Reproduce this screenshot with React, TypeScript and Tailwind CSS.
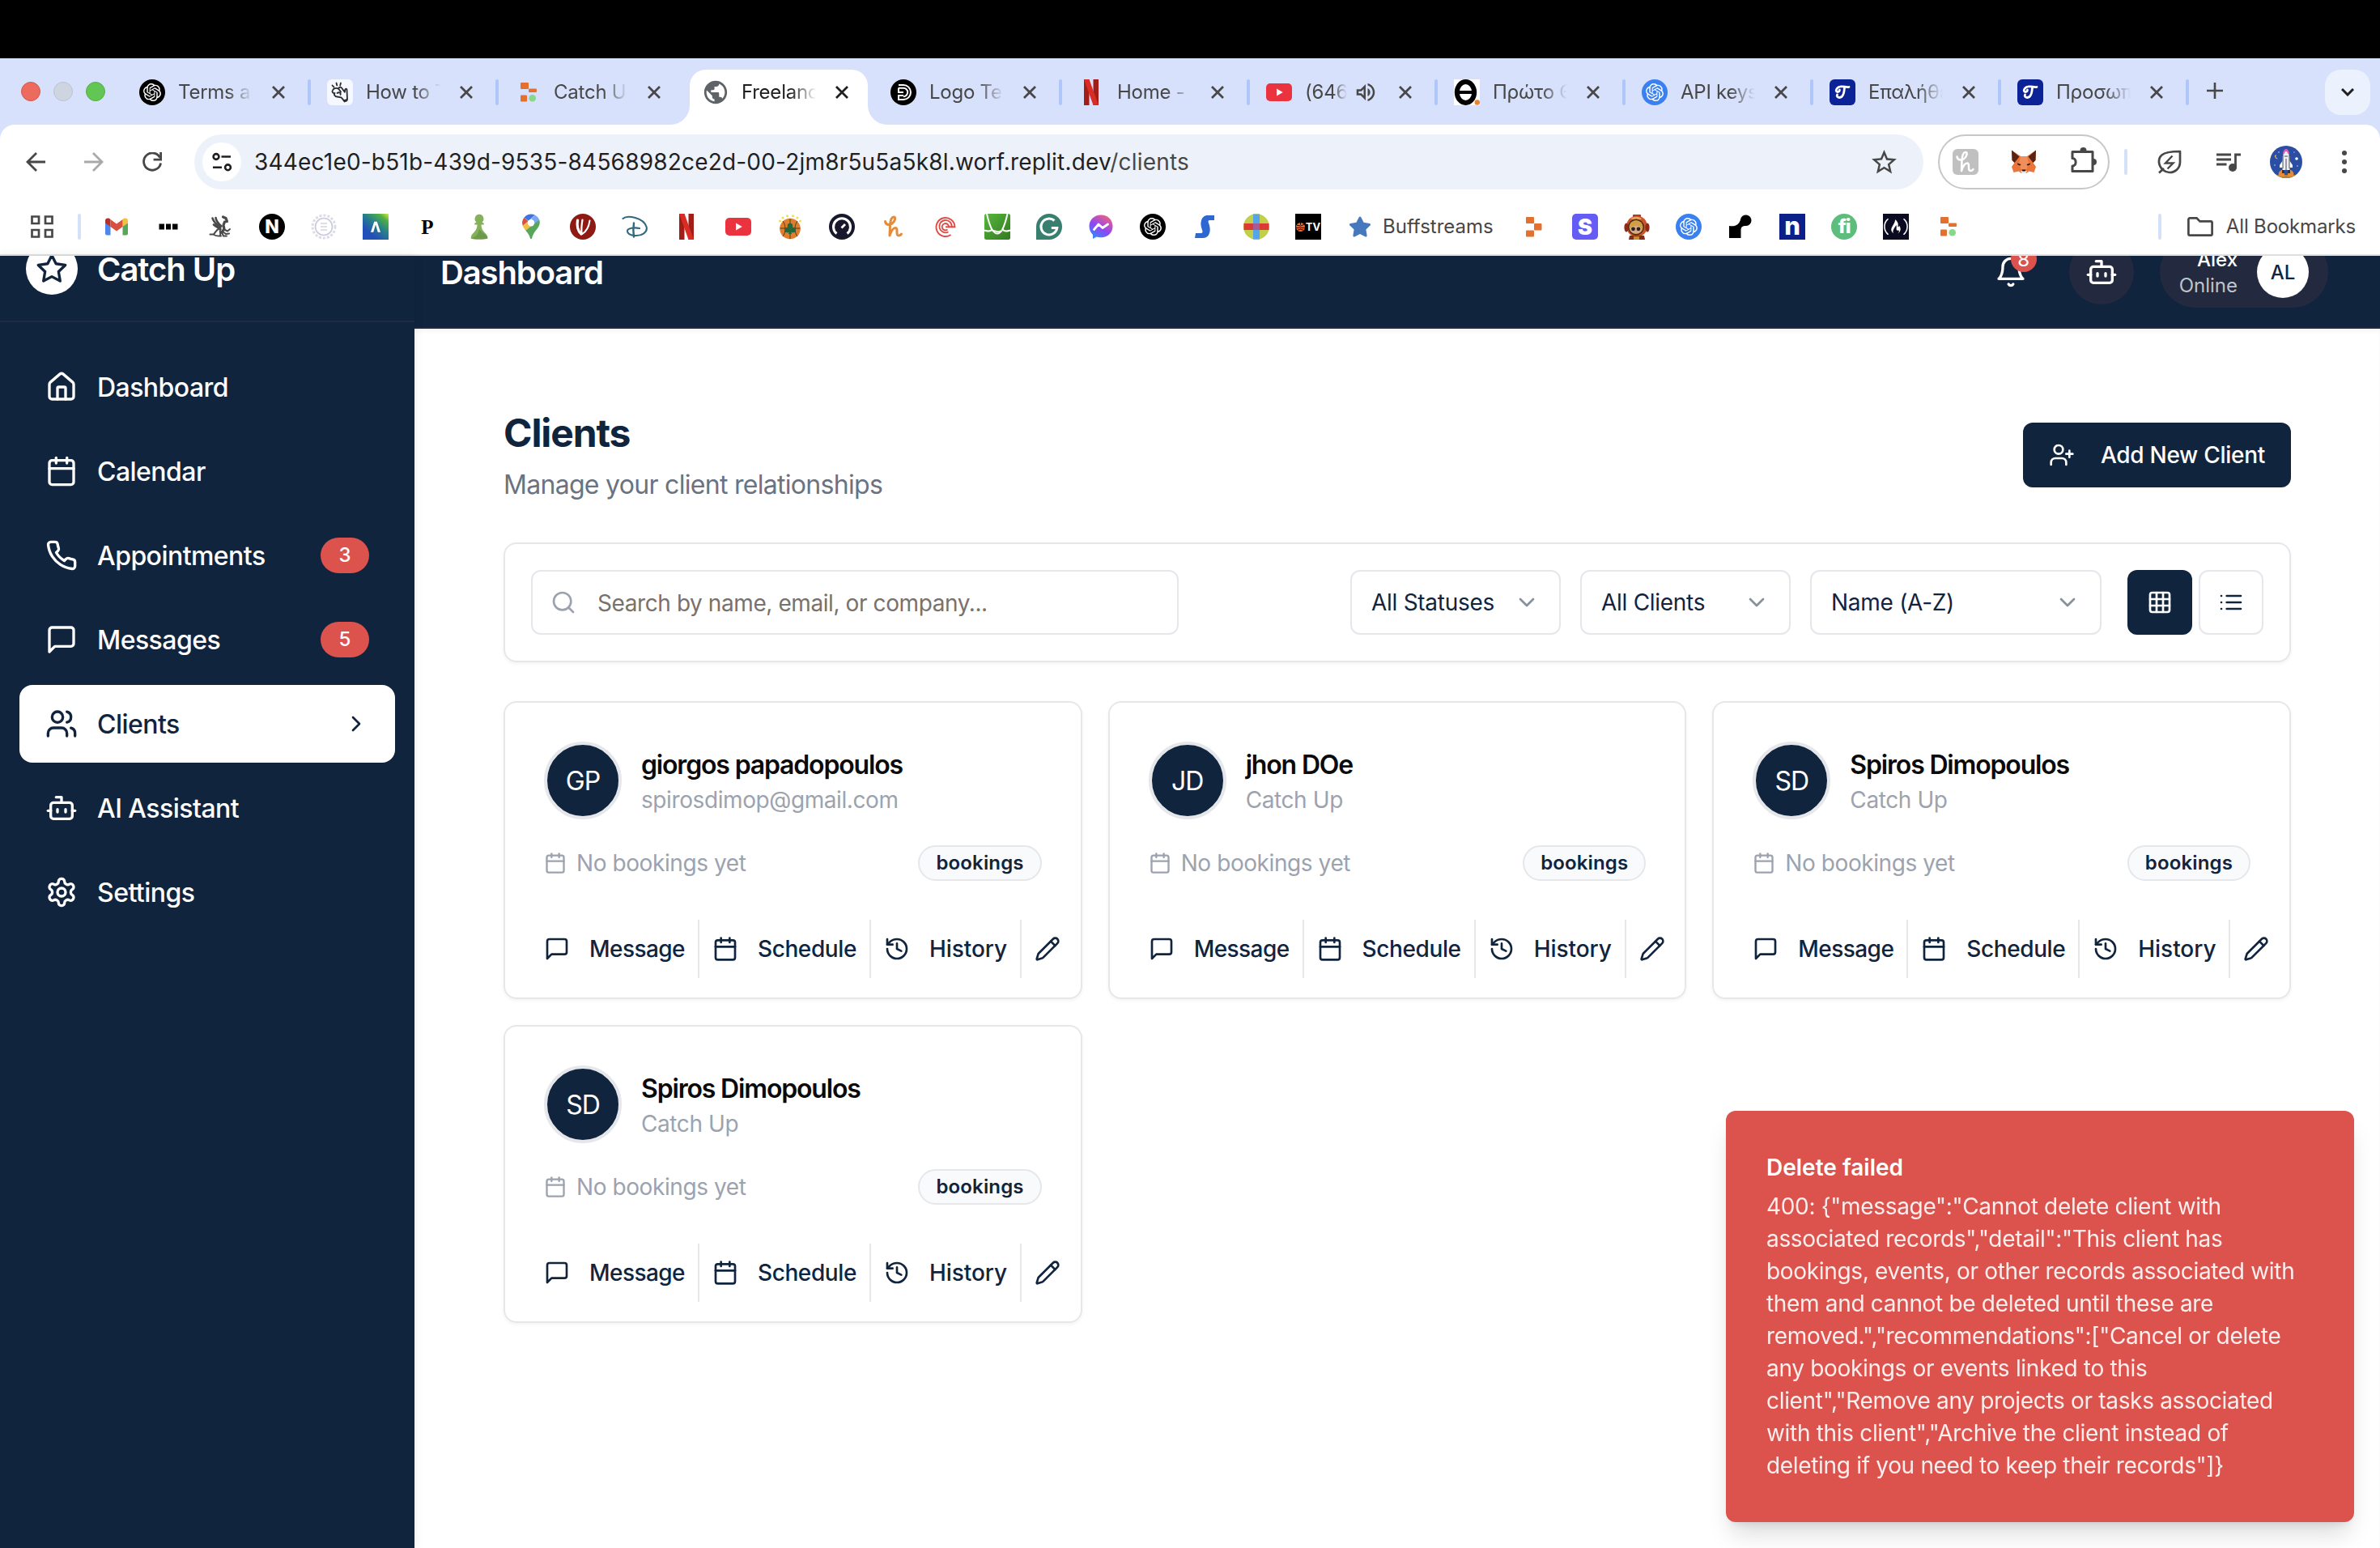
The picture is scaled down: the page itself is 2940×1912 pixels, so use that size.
import type { ReactNode } from "react";
import {
  Bot,
  Calendar,
  ChevronDown,
  ChevronRight,
  Grid3x3,
  History,
  House,
  Pencil,
  Search,
  UserPlus,
  Users,
} from "lucide-react";
import { SiOpenai } from "react-icons/si";
import { MdPublic, MdStarBorder, MdOutlineVolumeUp } from "react-icons/md";
import { FaFreeCodeCamp, FaStar } from "react-icons/fa";

/* ---------- line icons ---------- */

function Line({ className, children }: { className: string; children: ReactNode }) {
  return (
    <svg
      viewBox="0 0 24 24"
      fill="none"
      stroke="currentColor"
      strokeWidth="2"
      strokeLinecap="round"
      strokeLinejoin="round"
      className={className}
    >
      {children}
    </svg>
  );
}

const MessageIcon = ({ className }: { className: string }) => (
  <Line className={className}>
    <path d="M21 15a2 2 0 0 1-2 2H7l-4 4V5a2 2 0 0 1 2-2h14a2 2 0 0 1 2 2z" />
  </Line>
);
const PhoneIcon = ({ className }: { className: string }) => (
  <Line className={className}>
    <path d="M22 16.92v3a2 2 0 0 1-2.18 2 19.79 19.79 0 0 1-8.63-3.07 19.5 19.5 0 0 1-6-6 19.79 19.79 0 0 1-3.07-8.67A2 2 0 0 1 4.11 2h3a2 2 0 0 1 2 1.72 12.84 12.84 0 0 0 .7 2.81 2 2 0 0 1-.45 2.11L8.09 9.91a16 16 0 0 0 6 6l1.27-1.27a2 2 0 0 1 2.11-.45 12.84 12.84 0 0 0 2.81.7A2 2 0 0 1 22 16.92z" />
  </Line>
);
const SettingsIcon = ({ className }: { className: string }) => (
  <Line className={className}>
    <path d="M12.22 2h-.44a2 2 0 0 0-2 2v.18a2 2 0 0 1-1 1.73l-.43.25a2 2 0 0 1-2 0l-.15-.08a2 2 0 0 0-2.73.73l-.22.38a2 2 0 0 0 .73 2.73l.15.1a2 2 0 0 1 1 1.72v.51a2 2 0 0 1-1 1.74l-.15.09a2 2 0 0 0-.73 2.73l.22.38a2 2 0 0 0 2.73.73l.15-.08a2 2 0 0 1 2 0l.43.25a2 2 0 0 1 1 1.73V20a2 2 0 0 0 2 2h.44a2 2 0 0 0 2-2v-.18a2 2 0 0 1 1-1.73l.43-.25a2 2 0 0 1 2 0l.15.08a2 2 0 0 0 2.73-.73l.22-.39a2 2 0 0 0-.73-2.73l-.15-.08a2 2 0 0 1-1-1.74v-.5a2 2 0 0 1 1-1.74l.15-.09a2 2 0 0 0 .73-2.73l-.22-.38a2 2 0 0 0-2.73-.73l-.15.08a2 2 0 0 1-2 0l-.43-.25a2 2 0 0 1-1-1.73V4a2 2 0 0 0-2-2z" />
    <circle cx="12" cy="12" r="3" />
  </Line>
);
const BellIcon = ({ className }: { className: string }) => (
  <Line className={className}>
    <path d="M6 8a6 6 0 0 1 12 0c0 7 3 9 3 9H3s3-2 3-9" />
    <path d="M10.3 21a1.94 1.94 0 0 0 3.4 0" />
  </Line>
);
const StarIcon = ({ className }: { className: string }) => (
  <Line className={className}>
    <polygon points="12 2 15.09 8.26 22 9.27 17 14.14 18.18 21.02 12 17.77 5.82 21.02 7 14.14 2 9.27 8.91 8.26 12 2" />
  </Line>
);
const ListIcon = ({ className }: { className: string }) => (
  <Line className={className}>
    <path d="M8 6h13M8 12h13M8 18h13M3 6h.01M3 12h.01M3 18h.01" />
  </Line>
);

/* ---------- site logos ---------- */

function Logo({ children }: { children: ReactNode }) {
  return (
    <svg viewBox="0 0 32 32" className="size-8 shrink-0">
      {children}
    </svg>
  );
}

const OpenAiLogo = ({ blue }: { blue?: boolean }) => (
  <span
    className={`flex size-8 shrink-0 items-center justify-center rounded-full ${blue ? "bg-[#3a80f0]" : "bg-black"}`}
  >
    <SiOpenai className="size-[22px] text-white" />
  </span>
);

const SnapLogo = () => (
  <Logo>
    <rect width="32" height="32" rx="6" fill="#f6f8ff" />
    <g fill="none" stroke="#2b2b2b" strokeWidth="1.8" strokeLinecap="round" strokeLinejoin="round">
      <path d="M6.5 7.5l2 2.200M11.500 4.500l.8 3M17 4.500l-.8 3" />
      <path d="M7 13.500c-1.500 2 .5 4 2.500 3.500-1.500 2 .5 4.500 3 4.500l5 .8 3.500 4 4-1.500-.3-7-.200-5c-.5-2-2.500-1-2.300 1l-.4 2-4-5.500c-1.500-1.500-4-.3-3.500 1.500-3-1.800-6.500-.5-7.300 1.700z" />
      <path d="M12.500 17c2-1.500 5-.5 4 2M14.500 12l2.500 3.500" />
    </g>
    <path d="M19.500 26l6-2-.3 3-4 1.500z" fill="#2b2b2b" />
  </Logo>
);

const ReplitDuo = () => (
  <Logo>
    <g fill="#e4702f">
      <rect x="7" y="4" width="10" height="8" rx="1" />
      <rect x="17" y="11.500" width="10" height="4.500" rx="1" />
      <rect x="7" y="19.500" width="8" height="8" rx="1" />
    </g>
    <circle cx="21.700" cy="23.200" r="4.300" fill="#86d98a" />
  </Logo>
);

const ReplitLogo = () => (
  <Logo>
    <g fill="#e4702f">
      <rect x="7" y="4" width="10" height="8" rx="1" />
      <rect x="17" y="12" width="9.500" height="8.500" rx="1" />
      <rect x="7" y="20.500" width="10" height="8" rx="1" />
    </g>
  </Logo>
);

const NetflixLogo = () => (
  <Logo>
    <path d="M7 0h6.500v32H7z" fill="#a31d18" />
    <path d="M18.500 0H25v32h-6.500z" fill="#a31d18" />
    <path d="M7 0h6.500L25 32h-6.500z" fill="#d92c25" />
  </Logo>
);

const YouTubeLogo = () => (
  <Logo>
    <rect y="5" width="32" height="22" rx="5" fill="#eb323f" />
    <path d="M13 11.500v9l7.800-4.500z" fill="#fff" />
  </Logo>
);

const LogoTemplate = () => (
  <Logo>
    <circle cx="16" cy="16" r="16" fill="#000" />
    <g fill="none" stroke="#fff" strokeWidth="2">
      <path d="M10 7h6a9 9 0 0 1 0 18H10v-5h6" />
      <path d="M10 10.800h6a5.200 5.200 0 0 1 0 10.400M10 10.500v5.500h6" />
    </g>
  </Logo>
);

const ThetaLogo = () => (
  <Logo>
    <rect width="32" height="32" fill="#fff" />
    <ellipse cx="14.500" cy="16" rx="10.700" ry="13" fill="none" stroke="#000" strokeWidth="6" />
    <path d="M4 16h21" stroke="#000" strokeWidth="4" />
    <circle cx="28.800" cy="28.500" r="3.200" fill="#e8852f" />
  </Logo>
);

const ScriptT = () => (
  <Logo>
    <rect width="32" height="32" rx="6" fill="#0b2396" />
    <g fill="none" stroke="#fff" strokeWidth="2.800" strokeLinecap="round" strokeLinejoin="round">
      <path d="M24 9.500c-4 .8-7-1.500-11-.5-4.500 1-6.500 6-3 6.500 1.800 0 2.600-1.500 2.400-2.500" />
      <path d="M18.500 10c-.3 5-1.500 12.500-6 12.500-2.500 0-4-2-3-3.500" />
    </g>
  </Logo>
);

const GmailLogo = () => (
  <Logo>
    <path d="M2 11v13.500a2 2 0 0 0 2 2h4.500V15z" fill="#4f86ec" />
    <path d="M30 11v13.500a2 2 0 0 1-2 2h-4.500V15z" fill="#58a55c" />
    <path d="M2 8.500C2 5.500 5.500 4.500 8.500 7v9L2 11.500z" fill="#b3322b" />
    <path d="M30 8.500C30 5.500 26.500 4.500 23.500 7v9l6.500-4.500z" fill="#f1bf42" />
    <path d="M8.500 7L16 12.500 23.500 7v9L16 21.500 8.500 16z" fill="#d85140" />
  </Logo>
);

const DotsLogo = () => (
  <Logo>
    <path d="M4.500 12.500h6.500v7H4.500zM13 12.500h6v7h-6zM21 12.500h6.500v7H21z" fill="#000" />
  </Logo>
);

const GriffinLogo = () => (
  <Logo>
    <g fill="none" stroke="#4a4a4a" strokeLinecap="round" strokeLinejoin="round">
      <path d="M6.500 5.500c1 4.500 5 8 9.500 12M10.500 5c.5 4 3.500 7.500 7 10.500M8 13.500c2.500 2.500 5.500 3.500 8.500 5.500" strokeWidth="2.600" />
      <path d="M19.500 4l3.500 1.500 1.500 4-3 .5-1.500 4 1 5-3.500 4" strokeWidth="3.200" />
      <path d="M15 18c-4 2-5 5-7 7.500H3.500M16 19.500c-1 3 1 4 0 7.500M20 19l5 2.500 3-2.500M19 22l4 3 4-.5M18 23l2 4.500h4" strokeWidth="2" />
      <path d="M8 25.500c2 2.500 6 2 9 2" strokeWidth="2" />
    </g>
  </Logo>
);

const LetterN = () => (
  <span className="flex size-8 items-center justify-center rounded-full bg-black text-[23px] font-extrabold leading-none text-white">
    N
  </span>
);

const GearLogo = () => (
  <Logo>
    <circle cx="16" cy="16" r="14" fill="none" stroke="#dcdce8" strokeWidth="3" strokeDasharray="3 2" />
    <circle cx="16" cy="16" r="10.500" fill="none" stroke="#c9c9dc" strokeWidth="1.600" />
    <path d="M12 12h8M12 16h8M12 20h8" stroke="#d4d4e2" strokeWidth="1.600" />
  </Logo>
);

const GradientA = () => (
  <Logo>
    <defs>
      <linearGradient id="ga" x1="1" y1="0" x2="0.350" y2="0.800">
        <stop offset="0" stopColor="#d5ea3c" />
        <stop offset="0.250" stopColor="#4fae48" />
        <stop offset="0.600" stopColor="#27808a" />
        <stop offset="1" stopColor="#2250b8" />
      </linearGradient>
    </defs>
    <rect width="32" height="32" fill="url(#ga)" />
    <path d="M10 22.800l4.300-13h3.400l4.300 13h-3.200L16 13.500l-2.800 9.300z" fill="#fff" />
  </Logo>
);

const LetterP = () => (
  <span className="text-[25px] font-bold leading-none text-black [font-family:'Liberation_Serif',serif]">P</span>
);

const PawnLogo = () => (
  <Logo>
    <path
      d="M16 .8a5.500 5.500 0 0 1 3.500 9.700l2.200 1.300v1.700h-3.200c.2 5 2 7.500 5 10.500 2 2 2.800 3.500 2.800 6.500-3 1.300-17.600 1.300-20.600 0 0-3 .8-4.500 2.800-6.500 3-3 4.800-5.500 5-10.500h-3.200v-1.700l2.200-1.300A5.500 5.500 0 0 1 16 .8z"
      fill="#85b15a"
    />
    <path d="M16 19c3 4 7 6 10.200 9v2.500c-3 1.300-17.600 1.300-20.600 0 4-.5 9-4 10.400-11.500z" fill="#6d9a4c" />
  </Logo>
);

const MapsLogo = () => (
  <Logo>
    <path d="M16 .5a11 11 0 0 0-8.400 3.900l5.400 4.500 7.700-7.300A11 11 0 0 0 16 .5z" fill="#3f74e0" />
    <path d="M7.600 4.400A11 11 0 0 0 5.800 15l6.800-5.700z" fill="#d85140" />
    <path d="M20.700 1.500a11 11 0 0 1 5.600 6l-7 6.500-5-5z" fill="#7aa7f5" />
    <path d="M5.800 15c.8 2.200 2 3.900 3.500 5.800L19.500 14l-7-5z" fill="#f1bf42" />
    <path d="M26.300 7.500C28 13 25 17 22 20.500c-3 3.700-4 6-5 10-.3 1-1.700 1-2 0-1-4-2.500-6-5.700-9.700z" fill="#58a55c" />
    <circle cx="16" cy="11.300" r="4.200" fill="#fff" />
  </Logo>
);

const VLogo = () => (
  <Logo>
    <circle cx="16" cy="16" r="16" fill="#8e1b13" />
    <g fill="none" stroke="#fff" strokeLinecap="round">
      <path d="M9.500 8c-1 6 0 13 4.500 17" strokeWidth="3.200" />
      <path d="M15.500 7.500c-1 6-1.500 12-1 17.500" strokeWidth="2.200" />
      <path d="M24.500 8.500c-1 7-4 13.500-9.500 16.500" strokeWidth="2" />
    </g>
  </Logo>
);

const DisneyLogo = () => (
  <Logo>
    <g fill="none" stroke="#30697b" strokeLinecap="round">
      <path d="M1.500 6C7 1 27 5 30.500 16c2 7-6 11.500-14 11-6-.3-10-3-9.500-6 .5-3 8-4.500 15-3" strokeWidth="2.100" />
      <path d="M15 11.500c-.8 5-.8 11 0 17" strokeWidth="2.400" />
    </g>
  </Logo>
);

const PaoLogo = () => (
  <Logo>
    <circle cx="16" cy="18.500" r="12.800" fill="#df7f2e" />
    <g fill="none" stroke="#57381a" strokeWidth="1">
      <path d="M16 6v25M3.500 18h25M7 9c4 5 4 14 0 19M25 9c-4 5-4 14 0 19" />
    </g>
    <g fill="#24683a">
      <circle cx="16" cy="15" r="3.300" />
      <circle cx="12.500" cy="20" r="3.300" />
      <circle cx="19.500" cy="20" r="3.300" />
      <path d="M15.200 20h1.600l1.200 5h-4z" />
    </g>
    <g fill="#f7dc4a">
      <circle cx="3.500" cy="9" r="1.500" />
      <circle cx="7" cy="5" r="1.500" />
      <circle cx="12.500" cy="2.800" r="1.500" />
      <circle cx="19.500" cy="2.800" r="1.500" />
      <circle cx="25" cy="5" r="1.500" />
      <circle cx="28.500" cy="9" r="1.500" />
    </g>
  </Logo>
);

const GaugeLogo = () => (
  <Logo>
    <circle cx="16" cy="16" r="16" fill="#17182c" />
    <path d="M9.500 24.500a10.500 10.500 0 1 1 13 0" fill="none" stroke="#fff" strokeWidth="3" />
    <path d="M15.500 17.500l4.500-4.500" stroke="#fff" strokeWidth="2.800" />
  </Logo>
);

const HoneyMark = ({ tone }: { tone: "orange" | "white" }) => (
  <g
    fill="none"
    stroke={tone === "orange" ? "#e58c3a" : "#ffffff"}
    strokeWidth={tone === "orange" ? 3 : 2.500}
    strokeLinecap="round"
    strokeLinejoin="round"
  >
    <path d="M5.500 9.500c.5 4 4.500 5 8 3 4-2.300 5.500-8.500 2.800-8.500-3 0-4.600 5-4.800 11l-.5 12c2-6 4.500-9.500 7-9.500 3.500 0 1 6 2.500 8.500 1 1.500 4 1 5-1" />
  </g>
);

const HoneyLogo = () => (
  <Logo>
    <HoneyMark tone="orange" />
  </Logo>
);

const CastLogo = () => (
  <Logo>
    <g fill="none" stroke="#dc4d48" strokeWidth="1.900">
      <path d="M22.500 26a11.500 11.500 0 1 1 5-9.700h-4" />
      <path d="M19.500 22.500a7.700 7.700 0 1 1 4.200-6.200h-4" />
      <path d="M18.500 19.500a4.200 4.200 0 1 1 1.600-3.200h-4" />
    </g>
  </Logo>
);

const GreenLogo = () => (
  <Logo>
    <defs>
      <linearGradient id="gg" x1="0" y1="0" x2="1" y2="1">
        <stop offset="0" stopColor="#55b83c" />
        <stop offset="1" stopColor="#33791f" />
      </linearGradient>
    </defs>
    <rect width="32" height="32" rx="2.500" fill="url(#gg)" />
    <g fill="none" stroke="#fff" strokeWidth="2">
      <path d="M3 0c1.500 7 3.500 14 6.500 20M22 20c3-6 5-13 6.500-20" />
      <path d="M0 20.500c3 .5 6 3 9.500-1 2.500 4 4.500 5 6.500 5s4-1 6.500-5c3.500 4 6.500 1.500 9.500 1" />
      <path d="M9.500 21c4-1 7 3.500 11 0" />
    </g>
  </Logo>
);

const GrammarlyLogo = () => (
  <Logo>
    <path d="M0 16a16 16 0 1 1 16 16H0z" fill="#397f70" />
    <path d="M22.500 8.500a10 10 0 1 0 3.300 9h-7" fill="none" stroke="#fff" strokeWidth="3" />
  </Logo>
);

const MessengerLogo = () => (
  <Logo>
    <defs>
      <linearGradient id="ms" x1="0.200" y1="1" x2="0.800" y2="0">
        <stop offset="0" stopColor="#2f8ff7" />
        <stop offset="0.450" stopColor="#8f45f5" />
        <stop offset="1" stopColor="#f0647c" />
      </linearGradient>
    </defs>
    <path d="M16 1.500C7.500 1.500 1.500 7.700 1.500 15.600c0 4.200 1.700 7.800 4.500 10.300v5l4.500-2.500c1.700.5 3.600.8 5.500.8 8.500 0 14.500-6 14.500-13.800S24.500 1.500 16 1.500z" fill="url(#ms)" />
    <path d="M7.500 19.500l5.500-6.500 5 4.500 6.500-4.500" fill="none" stroke="#fff" strokeWidth="2.800" strokeLinejoin="round" strokeLinecap="round" />
  </Logo>
);

const BlueS = () => (
  <Logo>
    <path d="M28 2v6h-5.500c-2 0-2.500 1-1.500 3.500 1.500 4 2 7 1.500 10.500-.8 5-4 8-8.500 8H4l1-6h6c2.500 0 3-1 2-4-1.500-4.500-2-7-1.300-10.500C12.700 4.500 15.500 2 20 2z" fill="#2f67d2" />
  </Logo>
);

const GlobeStripes = () => (
  <Logo>
    <circle cx="16" cy="16" r="16" fill="#c2cf4a" />
    <path d="M12 .5h8v31h-8z" fill="#56a5e8" />
    <path d="M.5 12h31v8H.5z" fill="#dd3a36" />
    <path d="M12 12h8v8h-8z" fill="#a85a92" />
  </Logo>
);

const TvLogo = () => (
  <span className="flex size-8 items-center justify-center gap-px bg-black text-[13px] font-bold leading-none text-white">
    <svg viewBox="0 0 12 12" className="size-[11px]">
      <circle cx="6" cy="6" r="6" fill="#ee6a2c" />
      <path d="M1 3.500l5 1 5-2M0 7h12M2 10l4-1 4 1M6 0v3" stroke="#000" strokeWidth="1" fill="none" />
    </svg>
    TV
  </span>
);

const StripeS = () => (
  <span className="flex size-8 items-center justify-center rounded-[5px] bg-[#655cf5] text-[27px] font-black leading-none text-white">
    S
  </span>
);

const DiverLogo = () => (
  <Logo>
    <rect x="11" y="1" width="10" height="4" rx="1" fill="#b3321f" />
    <circle cx="16" cy="15.500" r="13" fill="#c9552a" />
    <ellipse cx="3" cy="17" rx="2.600" ry="5.500" fill="#8f2a1a" />
    <ellipse cx="29" cy="17" rx="2.600" ry="5.500" fill="#8f2a1a" />
    <path d="M8 6c4-3 10-3 14 0l-5 3z" fill="#e9a35b" />
    <circle cx="15" cy="16.500" r="10" fill="#4a2415" />
    <circle cx="15" cy="16.500" r="8.600" fill="#cf9f45" />
    <ellipse cx="15" cy="19.500" rx="7" ry="4.800" fill="#d9a98c" />
    <circle cx="11.500" cy="18.800" r="2.400" fill="#2c211f" />
    <circle cx="18" cy="18.800" r="2.400" fill="#2c211f" />
    <path d="M7 27h18l1 5H6z" fill="#7f2e1a" />
    <path d="M12 28h7v4h-7z" fill="#c98a38" />
  </Logo>
);

const BlobLogo = () => (
  <Logo>
    <path d="M2 15c8 1.500 13-2.500 14-8a6.800 6.800 0 1 1 7 8c-5 0-6.500 1.500-6.500 6v9H2z" fill="#000" />
  </Logo>
);

const LetterSmallN = () => (
  <span className="flex size-8 items-center justify-center bg-[#0b2189] pb-[3px] text-[31px] font-extrabold leading-none text-white">
    n
  </span>
);

const FiverrLogo = () => (
  <span className="flex size-8 items-center justify-center rounded-full bg-[#5cbd7c] text-[24px] font-extrabold leading-none tracking-tighter text-white">
    fi
  </span>
);

const CampLogo = () => (
  <span className="flex size-8 items-center justify-center bg-[#0a0a20]">
    <FaFreeCodeCamp className="size-[30px] text-white" />
  </span>
);

const FoxLogo = () => (
  <svg viewBox="0 0 32 32" className="size-8">
    <path d="M1 1.500L12 9h8L31 1.500 30.500 14l-3 3 3.500 5-2.500 7-6-1.500L19 30h-6l-3.500-2.500-6 1.500L1 22l3.500-5-3-3z" fill="#e9753a" />
    <path d="M1 1.500l9.500 8L4.500 17l-3-3zM31 1.500l-9.500 8 6 7.500 3-3z" fill="#5a2212" />
    <path d="M12 9h8l2 9-3 8h-6l-3-8z" fill="#f08f5c" />
    <path d="M8 17.500l4.500 1.500-1 1.500-3-1zM24 17.500L19.500 19l1 1.500 3-1z" fill="#2f1a12" />
    <path d="M12 27h8l-1.500 3h-5z" fill="#e6e6e6" />
    <path d="M13.500 25.500h5l-1 2h-3z" fill="#20130f" />
  </svg>
);

const RocketAvatar = () => (
  <svg viewBox="0 0 40 40" className="size-10">
    <defs>
      <clipPath id="av">
        <circle cx="20" cy="20" r="20" />
      </clipPath>
    </defs>
    <g clipPath="url(#av)">
      <rect width="40" height="40" fill="#2a4ea4" />
      <rect y="36" width="40" height="4" fill="#b98234" />
      <path d="M11 38c-1-4 0-6 3-8h4v8zM29 38c1-4 0-6-3-8h-4v8z" fill="#e5893a" />
      <path d="M15 13h10v17H15z" fill="#9a9aa2" />
      <path d="M20 4c3 3 4 7 4 12v14h-8V16c0-5 1-9 4-12z" fill="#eceef2" />
      <path d="M16 10c0-3 2-6 4-6s4 3 4 6h-2c0-2-1-3-2-3s-2 1-2 3z" fill="#e05bb4" />
      <path d="M16 18l-4 6v3h4zM24 18l4 6v3h-4z" fill="#fff" />
      <path d="M15 30h3v4h-3zM22 30h3v4h-3z" fill="#30343f" />
      <path d="M18 13h4M20 16v14M16 12v16M24 12v16" stroke="#444a5a" strokeWidth="1" />
      <path d="M6 12c0 3 2 5 4 4-3-1-3-3-2-5z" fill="#f1c84b" />
      <circle cx="33" cy="16" r="1.800" fill="#fff" />
      <circle cx="11" cy="8" r=".8" fill="#cdd8f5" />
      <circle cx="30" cy="8" r=".8" fill="#e58ac0" />
      <circle cx="34" cy="25" r=".8" fill="#cdd8f5" />
      <circle cx="6" cy="24" r=".8" fill="#cdd8f5" />
    </g>
  </svg>
);

/* ---------- browser frame ---------- */

const CloseIcon = () => (
  <svg viewBox="0 0 16 16" className="size-4 shrink-0" fill="none" stroke="currentColor" strokeWidth="2.800">
    <path d="M1 1l14 14M15 1L1 15" />
  </svg>
);

type TabData = { title: string; icon: ReactNode; active?: boolean; sound?: boolean; sep?: boolean };

const tabs: TabData[] = [
  { title: "Terms an", icon: <OpenAiLogo />, sep: true },
  { title: "How to T", icon: <SnapLogo />, sep: true },
  { title: "Catch U", icon: <ReplitDuo /> },
  { title: "Freelanc", icon: <MdPublic className="size-[34px] -mx-px shrink-0 text-[#5f6368]" />, active: true },
  { title: "Logo Te", icon: <LogoTemplate />, sep: true },
  { title: "Home -", icon: <NetflixLogo />, sep: true },
  { title: "(646", icon: <YouTubeLogo />, sound: true, sep: true },
  { title: "Πρώτο Θ", icon: <ThetaLogo />, sep: true },
  { title: "API keys", icon: <OpenAiLogo blue />, sep: true },
  { title: "Επαλήθε", icon: <ScriptT />, sep: true },
  { title: "Προσωπ", icon: <ScriptT />, sep: true },
];

function Tab({ tab }: { tab: TabData }) {
  return (
    <div className={`relative flex h-[68px] w-[232px] shrink-0 items-start px-1.5 ${tab.active ? "text-[#1f1f1f]" : "text-[#474747]"}`}>
      {tab.active && (
        <>
          <svg viewBox="0 0 24 24" className="absolute bottom-0 -left-[18px] size-6">
            <path d="M24 0v24H0A24 24 0 0 0 24 0z" fill="#fff" />
          </svg>
          <svg viewBox="0 0 24 24" className="absolute -right-[18px] bottom-0 size-6">
            <path d="M0 0v24h24A24 24 0 0 1 0 0z" fill="#fff" />
          </svg>
        </>
      )}
      <div className={`flex h-[68px] w-[220px] items-center pb-3 pl-4 ${tab.active ? "rounded-t-[20px] bg-white" : ""}`}>
        {tab.icon}
        <span
          className={`ml-4 overflow-hidden whitespace-nowrap text-[24px] tracking-[-0.01em] [mask-image:linear-gradient(to_right,#000_66%,transparent)] ${
            tab.sound ? "w-[52px]" : "w-[92px]"
          }`}
        >
          {tab.title}
        </span>
        {tab.sound && <MdOutlineVolumeUp className="ml-2 size-[30px] shrink-0" />}
        <span className={tab.sound ? "ml-[26px]" : "ml-6"}>
          <CloseIcon />
        </span>
      </div>
      {tab.sep && <span className="absolute top-3 -right-0.5 h-8 w-1 rounded-full bg-[#aec6f8]" />}
    </div>
  );
}

function TabStrip() {
  return (
    <div className="flex h-[82px] items-start bg-[#d7e1fb] pt-[14px] pr-3">
      <div className="flex h-[54px] w-[150px] shrink-0 items-center gap-4 pl-[26px]">
        <span className="size-6 rounded-full border border-[#d6584d] bg-[#ec6a5e]" />
        <span className="size-6 rounded-full border border-[#bcc3d0] bg-[#ced5e1]" />
        <span className="size-6 rounded-full border border-[#57ae42] bg-[#62c654]" />
      </div>
      {tabs.map((t, i) => (
        <Tab key={i} tab={t} />
      ))}
      <svg viewBox="0 0 20 20" className="mt-4 ml-6 size-5" fill="none" stroke="#474747" strokeWidth="2.600">
        <path d="M10 0v20M0 10h20" />
      </svg>
      <span className="ml-auto flex size-14 items-center justify-center rounded-[20px] bg-[#ecf2fd]">
        <svg viewBox="0 0 16 10" className="h-[10px] w-4" fill="none" stroke="#1f1f1f" strokeWidth="3">
          <path d="M1 1l7 7 7-7" />
        </svg>
      </span>
    </div>
  );
}

function Toolbar() {
  return (
    <div className="flex h-[92px] items-center pr-[41px] pl-8 text-[#474747]">
      <svg viewBox="0 0 24 24" className="size-6" fill="none" stroke="currentColor" strokeWidth="2.800">
        <path d="M24 12H2M13 1L2 12l11 11" />
      </svg>
      <svg viewBox="0 0 24 24" className="ml-12 size-6" fill="none" stroke="#a9a9a9" strokeWidth="2.800">
        <path d="M0 12h22M11 1l11 11-11 11" />
      </svg>
      <svg viewBox="0 0 24 24" className="ml-12 size-6" fill="none" stroke="currentColor" strokeWidth="2.800">
        <path d="M21.500 6.500A10.600 10.600 0 1 0 22.600 13.500" />
        <path d="M22.600 0v9.200h-9" />
      </svg>
      <div className="ml-10 flex h-[68px] w-[2136px] items-center rounded-full bg-[#edf2fa] pr-[30px] pl-[10px]">
        <span className="flex size-12 items-center justify-center rounded-full bg-white">
          <svg viewBox="0 0 26 24" className="h-6 w-[26px]" fill="none" stroke="#1f1f1f" strokeWidth="2.600">
            <circle cx="6" cy="5.500" r="3.400" />
            <path d="M12.500 5.500H24M2 18.800h11" />
            <circle cx="20.500" cy="18.800" r="3.400" />
          </svg>
        </span>
        <span className="ml-4 text-[28px] tracking-[0.0068em] text-[#1f1f1f]">
          344ec1e0-b51b-439d-9535-84568982ce2d-00-2jm8r5u5a5k8l.worf.replit.dev
          <span className="text-[#474747]">/clients</span>
        </span>
        <MdStarBorder className="ml-auto size-[37px]" />
      </div>
      <div className="ml-[18px] flex h-[68px] w-[212px] items-center justify-between rounded-full border-2 border-[#c7c7c7] pr-3.5 pl-4">
        <svg viewBox="0 0 32 32" className="size-8">
          <rect width="32" height="32" rx="6" fill="#c0c0c0" />
          <HoneyMark tone="white" />
        </svg>
        <span className="-ml-0.5">
          <FoxLogo />
        </span>
        <svg viewBox="0 0 32 32" className="-mt-1 size-8" fill="none" stroke="currentColor" strokeWidth="3">
          <path d="M2 5.500h25v24H2v-6.500c5.500 0 5.500-9.500 0-9.500z" strokeLinejoin="round" />
          <path d="M11.500 4a4 4 0 0 1 8 0zM28 14a4 4 0 0 1 0 8z" fill="currentColor" stroke="none" />
        </svg>
      </div>
      <span className="ml-[18px] h-8 w-1 rounded-full bg-[#d3e1fb]" />
      <svg viewBox="0 0 30 30" className="ml-[37px] size-[30px]" fill="none" stroke="currentColor" strokeWidth="2.700">
        <path d="M28 2v13c0 8-6 13-13 13-3 0-5.500-1-8-3C.500 19 .500 11 5.500 6.500 9.500 3 17 2 28 2z" strokeLinejoin="round" />
        <path d="M8 23l-6 5.500" />
        <path d="M18.500 7.500l-8.500 9h9.500l-7 7" strokeWidth="2.400" />
      </svg>
      <svg viewBox="0 0 30 24" className="ml-[43px] h-6 w-[30px]" fill="none" stroke="currentColor" strokeWidth="2.800">
        <path d="M0 3h18M0 9h18M0 15h12.500M30 3h-6.500v16" />
        <circle cx="20" cy="19" r="5" fill="currentColor" stroke="none" />
      </svg>
      <span className="ml-9">
        <RocketAvatar />
      </span>
      <svg viewBox="0 0 6 28" className="ml-auto h-7 w-1.5" fill="currentColor">
        <circle cx="3" cy="3" r="3" />
        <circle cx="3" cy="14" r="3" />
        <circle cx="3" cy="25" r="3" />
      </svg>
    </div>
  );
}

const bookmarks: ReactNode[] = [
  <GmailLogo />,
  <DotsLogo />,
  <GriffinLogo />,
  <LetterN />,
  <GearLogo />,
  <GradientA />,
  <LetterP />,
  <PawnLogo />,
  <MapsLogo />,
  <VLogo />,
  <DisneyLogo />,
  <NetflixLogo />,
  <YouTubeLogo />,
  <PaoLogo />,
  <GaugeLogo />,
  <HoneyLogo />,
  <CastLogo />,
  <GreenLogo />,
  <GrammarlyLogo />,
  <MessengerLogo />,
  <OpenAiLogo />,
  <BlueS />,
  <GlobeStripes />,
  <TvLogo />,
];

const bookmarksAfter: ReactNode[] = [
  <ReplitLogo />,
  <StripeS />,
  <DiverLogo />,
  <OpenAiLogo blue />,
  <BlobLogo />,
  <LetterSmallN />,
  <FiverrLogo />,
  <CampLogo />,
  <ReplitDuo />,
];

function Slot({ children }: { children: ReactNode }) {
  return <span className="flex w-16 shrink-0 items-center justify-center">{children}</span>;
}

function BookmarksBar() {
  return (
    <div className="flex h-[68px] items-center pr-[30px] pl-[38px] text-[24px] text-[#474747]">
      <svg viewBox="0 0 28 28" className="size-7" fill="none" stroke="currentColor" strokeWidth="2.700">
        <path d="M1.500 1.500h8.500v8.500H1.500zM18 1.500h8.500v8.500H18zM1.500 18h8.500v8.500H1.500zM18 18h8.500v8.500H18z" />
      </svg>
      <span className="mr-3 ml-[30px] h-8 w-1 rounded-full bg-[#d3e1fb]" />
      {bookmarks.map((b, i) => (
        <Slot key={i}>{b}</Slot>
      ))}
      <div className="flex w-[214px] shrink-0 items-center gap-3.5 pl-[18px]">
        <FaStar className="size-7 text-[#4678bd]" />
        <span>Buffstreams</span>
      </div>
      {bookmarksAfter.map((b, i) => (
        <Slot key={i}>{b}</Slot>
      ))}
      <span className="ml-auto h-8 w-1 rounded-full bg-[#d3e1fb]" />
      <svg viewBox="0 0 32 24" className="mr-4 ml-8 h-6 w-8" fill="none" stroke="currentColor" strokeWidth="2.700">
        <path d="M3 1.400h8.500l4 4H29a1.600 1.600 0 0 1 1.600 1.600v14A1.600 1.600 0 0 1 29 22.600H3A1.600 1.600 0 0 1 1.400 21V3A1.600 1.600 0 0 1 3 1.400z" />
      </svg>
      <span className="tracking-[-0.007em]">All Bookmarks</span>
    </div>
  );
}

/* ---------- application ---------- */

type NavEntry = { label: string; icon: ReactNode; badge?: string; active?: boolean };

const nav: NavEntry[] = [
  { label: "Dashboard", icon: <House className="size-10" /> },
  { label: "Calendar", icon: <Calendar className="size-10" /> },
  { label: "Appointments", icon: <PhoneIcon className="size-10" />, badge: "3" },
  { label: "Messages", icon: <MessageIcon className="size-10" />, badge: "5" },
  { label: "Clients", icon: <Users className="size-10" />, active: true },
  { label: "AI Assistant", icon: <Bot className="size-10" /> },
  { label: "Settings", icon: <SettingsIcon className="size-10" /> },
];

function Sidebar() {
  return (
    <aside className="z-10 flex w-[512px] shrink-0 flex-col overflow-hidden bg-[#11243d] text-white shadow-[0_0_12px_rgba(0,0,0,0.08)]">
      <div className="-mt-12 flex h-[130px] shrink-0 items-center gap-6 border-b-2 border-[#1e2b45] px-8">
        <span className="flex size-16 items-center justify-center rounded-full bg-white text-[#11243d]">
          <StarIcon className="size-10" />
        </span>
        <span className="pt-0.5 text-[40px] font-semibold tracking-[-0.026em]">Catch Up</span>
      </div>
      <nav className="flex flex-col gap-2 px-6 py-8">
        {nav.map((n) => (
          <div
            key={n.label}
            className={`flex h-24 items-center rounded-2xl px-8 ${n.active ? "bg-white text-[#11243d]" : ""}`}
          >
            {n.icon}
            <span className="ml-6 pt-0.5 text-[32px] font-medium tracking-[-0.017em]">{n.label}</span>
            {n.badge && (
              <span className="ml-auto flex h-11 w-[60px] items-center justify-center rounded-full bg-[#dc524c] text-[24px] font-medium">
                {n.badge}
              </span>
            )}
            {n.active && <ChevronRight className="ml-auto size-8" />}
          </div>
        ))}
      </nav>
    </aside>
  );
}

function AppHeader() {
  return (
    <header className="h-[90px] shrink-0 overflow-hidden bg-[#11243d] text-white">
      <div className="-mt-12 flex h-[138px] items-center gap-8 border-b-2 border-[#1f2a45] pr-16 pl-8">
        <h1 className="mr-auto pt-px text-[40px] font-semibold tracking-[-0.028em]">Dashboard</h1>
        <span className="relative flex size-20 items-center justify-center">
          <BellIcon className="size-10" />
          <span className="absolute top-2 right-2 flex size-8 items-center justify-center rounded-full bg-[#dc524c] pt-0.5 text-[24px]">
            8
          </span>
        </span>
        <span className="flex size-20 items-center justify-center rounded-full bg-[#232a3f]">
          <Bot className="size-10" />
        </span>
        <div className="flex h-[88px] items-center gap-6 rounded-full bg-[#232a3f] px-6">
          <div className="pt-0.5 text-right text-[24px] leading-8">
            <div className="font-medium">Alex</div>
            <div className="text-[#bfc3cb]">Online</div>
          </div>
          <span className="flex size-16 items-center justify-center rounded-full bg-white pt-px text-[24px] font-medium text-[#11243d]">
            AL
          </span>
        </div>
      </div>
    </header>
  );
}

function Select({ label, wide }: { label: string; wide?: boolean }) {
  return (
    <div
      className={`flex h-20 items-center justify-between rounded-xl border-2 border-[#e5e7eb] px-6 text-[28px] tracking-[-0.01em] ${
        wide ? "w-[360px]" : "w-[260px]"
      }`}
    >
      {label}
      <ChevronDown className="size-8 opacity-50" />
    </div>
  );
}

function FilterBar() {
  return (
    <section className="mt-12 flex items-center rounded-2xl border-2 border-[#e5e7eb] p-8 shadow-[0_2px_4px_rgba(0,0,0,0.05)]">
      <div className="mr-auto flex h-20 w-[800px] items-center gap-[26px] rounded-xl border-2 border-[#e5e7eb] px-[22px] text-[28px]">
        <Search className="size-8 text-[#9ca3af]" />
        <span className="pt-0.5 tracking-[-0.0148em] text-[#78716c]">Search by name, email, or company...</span>
      </div>
      <div className="flex gap-6">
        <Select label="All Statuses" />
        <Select label="All Clients" />
        <Select label="Name (A-Z)" wide />
      </div>
      <div className="ml-8 flex gap-2">
        <span className="flex size-20 items-center justify-center rounded-xl bg-[#11243d] text-white">
          <Grid3x3 className="size-8" />
        </span>
        <span className="flex size-20 items-center justify-center rounded-xl border-2 border-[#e5e7eb]">
          <ListIcon className="size-8" />
        </span>
      </div>
    </section>
  );
}

const clients = [
  { initials: "GP", name: "giorgos papadopoulos", detail: "spirosdimop@gmail.com" },
  { initials: "JD", name: "jhon DOe", detail: "Catch Up" },
  { initials: "SD", name: "Spiros Dimopoulos", detail: "Catch Up" },
  { initials: "SD", name: "Spiros Dimopoulos", detail: "Catch Up" },
];

function Action({ icon, label }: { icon: ReactNode; label: string }) {
  return (
    <span className="flex items-center gap-6 border-r-2 border-[#e5e7eb] px-4">
      {icon}
      {label}
    </span>
  );
}

function ClientCard({ client }: { client: (typeof clients)[number] }) {
  return (
    <article className="h-[368px] rounded-2xl border-2 border-[#e5e7eb] pt-12 shadow-[0_2px_4px_rgba(0,0,0,0.05)]">
      <div className="flex items-center gap-6 px-12">
        <span className="flex size-24 items-center justify-center rounded-full border-4 border-[#e5e7eb] bg-[#11243d] pt-0.5 text-[32px] tracking-[-0.03em] text-white">
          {client.initials}
        </span>
        <div>
          <h3 className="pt-0.5 text-[32px] font-semibold leading-[46px] tracking-[-0.0365em] text-[#0a0a0a]">
            {client.name}
          </h3>
          <p className="text-[28px] leading-10 tracking-[-0.0145em] text-[#9ca3af]">{client.detail}</p>
        </div>
      </div>
      <div className="mt-8 flex items-center px-12">
        <Calendar className="size-7 text-[#9ca3af]" />
        <span className="ml-3 text-[28px] leading-10 tracking-[-0.015em] text-[#9ca3af]">No bookings yet</span>
        <span className="ml-auto flex h-11 items-center rounded-full border-2 border-[#e5e7eb] bg-[#f8fafc] px-5 text-[24px] font-semibold tracking-[0.006em]">
          bookings
        </span>
      </div>
      <div className="mt-12 flex h-[72px] px-8 text-[28px] font-medium tracking-[-0.014em]">
        <span className="flex items-center gap-6 border-r-2 border-[#e5e7eb] px-4 tracking-[-0.02em]">
          <MessageIcon className="size-8" />
          Message
        </span>
        <Action icon={<Calendar className="size-8" />} label="Schedule" />
        <span className="flex items-center gap-6 border-r-2 border-[#e5e7eb] px-4 tracking-[-0.002em]">
          <History className="size-8" />
          History
        </span>
        <span className="flex items-center pl-4">
          <Pencil className="size-8" />
        </span>
      </div>
    </article>
  );
}

const toastLines = [
  '400: {"message":"Cannot delete client with',
  'associated records","detail":"This client has',
  "bookings, events, or other records associated with",
  "them and cannot be deleted until these are",
  'removed.","recommendations":["Cancel or delete',
  "any bookings or events linked to this",
  'client","Remove any projects or tasks associated',
  'with this client","Archive the client instead of',
  'deleting if you need to keep their records"]}',
];

function Toast() {
  return (
    <div className="absolute right-8 bottom-8 h-[508px] w-[776px] rounded-xl bg-[#dc524c] p-[50px] text-[28px] leading-10 text-white shadow-[0_20px_30px_-6px_rgba(0,0,0,0.14),0_8px_12px_-8px_rgba(0,0,0,0.14)]">
      <div className="font-semibold">Delete failed</div>
      <div className="mt-2 whitespace-nowrap tracking-[-0.0115em] opacity-90">
        {toastLines.map((l) => (
          <div key={l}>{l}</div>
        ))}
      </div>
    </div>
  );
}

export default function App() {
  return (
    <div className="relative flex h-[1912px] w-[2940px] flex-col overflow-hidden bg-white [font-family:Inter,'Noto_Sans',sans-serif]">
      <div className="h-[72px] shrink-0 bg-black" />
      <div className="shrink-0 bg-[#d7e1fb]">
        <TabStrip />
        <div className="rounded-t-[18px] border-b-2 border-[#dfdfdf] bg-white">
          <Toolbar />
          <BookmarksBar />
        </div>
      </div>
      <div className="flex min-h-0 grow text-[#11243d]">
        <Sidebar />
        <div className="flex grow flex-col">
          <AppHeader />
          <main className="grow px-[110px] pt-24 shadow-[inset_0_4px_6px_-2px_rgba(0,0,0,0.06)]">
            <div className="flex items-center justify-between">
              <div>
                <h2 className="pt-0.5 text-[48px] font-bold leading-[62px] tracking-[-0.023em]">Clients</h2>
                <p className="mt-2 pt-0.5 text-[32px] leading-[46px] tracking-[-0.022em] text-[#6b7280]">
                  Manage your client relationships
                </p>
              </div>
              <button className="flex h-20 items-center gap-8 rounded-xl bg-[#11243d] px-8 text-[28px] font-medium tracking-[-0.01em] text-white">
                <UserPlus className="size-8" />
                Add New Client
              </button>
            </div>
            <FilterBar />
            <div className="mt-12 grid grid-cols-3 gap-8">
              {clients.map((c, i) => (
                <ClientCard key={i} client={c} />
              ))}
            </div>
          </main>
        </div>
      </div>
      <Toast />
    </div>
  );
}
